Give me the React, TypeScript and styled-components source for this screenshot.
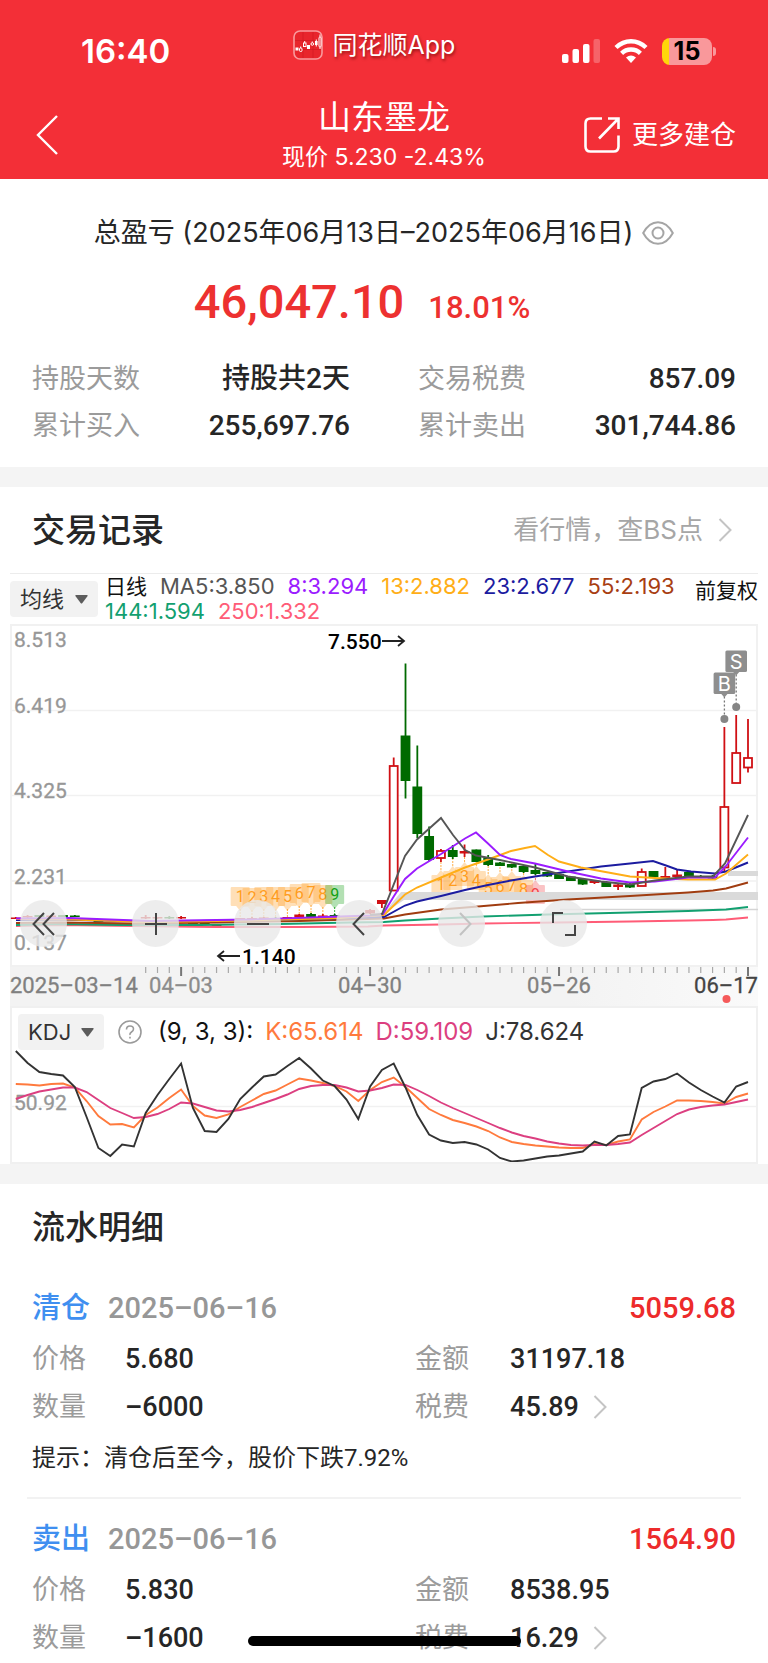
import React from "react";
import styled, { createGlobalStyle } from "styled-components";

const SANS = `Inter, "Noto Sans CJK SC", sans-serif`;
const DIGITS = `Roboto, "Noto Sans CJK SC", sans-serif`;

const GlobalStyle = createGlobalStyle`
  * { box-sizing: border-box; }
  body { margin: 0; background: #fff; color: #262626; font-family: ${SANS}; }
  button, select { font: inherit; color: inherit; border: 0; background: none; padding: 0; margin: 0; cursor: pointer; }
  a { color: inherit; text-decoration: none; }
  h1, h2, p, dl, dd { margin: 0; font-weight: 400; }
  svg { display: block; flex: none; }
`;

/* ---------- header ---------- */

const Page = styled.main`
  width: 100%;
  overflow-x: hidden;
`;

const Header = styled.header`
  background: #f32f37;
  color: #fff;
  padding: 12px 32px 0;
`;

const StatusBar = styled.div`
  display: grid;
  grid-template-columns: 1fr auto 1fr;
  align-items: center;
  height: 78px;
`;

const Clock = styled.time`
  padding-left: 49px;
  font-size: 33px;
  line-height: 40px;
  font-weight: 600;
`;

const AppBadge = styled.div`
  display: flex;
  align-items: center;
  gap: 10px;
  padding: 0 20px 12px 0;
  font-size: 25px;
  line-height: 32px;
  text-shadow: 1px 2px 3px rgba(90, 0, 0, 0.6);
`;

const StatusIcons = styled.div`
  display: flex;
  justify-content: flex-end;
  align-items: center;
  gap: 14px;
  padding-right: 20px;
`;

const Nav = styled.nav`
  display: grid;
  grid-template-columns: 1fr auto 1fr;
  align-items: center;
  height: 89px;
`;

const BackButton = styled.button`
  justify-self: start;
  padding: 0 4px;
`;

const Title = styled.h1`
  font-size: 33px;
  line-height: 44px;
  text-align: center;
`;

const Quote = styled.p`
  font-size: 23px;
  line-height: 36px;
  text-align: center;
`;

const MoreButton = styled.button`
  display: flex;
  align-items: center;
  justify-self: end;
  gap: 12px;
  font-size: 26px;
  line-height: 34px;
`;

/* ---------- summary ---------- */

const Summary = styled.section`
  padding: 34px 32px 18px;
`;

const Period = styled.div`
  display: flex;
  justify-content: center;
  align-items: center;
  gap: 9px;
  font-size: 27px;
  line-height: 40px;
`;

const Total = styled.div`
  display: flex;
  justify-content: center;
  align-items: baseline;
  gap: 24px;
  padding-right: 44px;
  margin: 21px 0 25px;
  color: #ed3130;
  font-family: ${DIGITS};
  font-weight: 500;
`;

const TotalAmount = styled.strong`
  font-size: 47px;
  line-height: 56px;
  font-weight: 500;
`;

const TotalRate = styled.span`
  font-size: 31px;
  line-height: 36px;
`;

const Stats = styled.dl`
  display: grid;
  grid-template-columns: 1fr 1fr;
  column-gap: 68px;
`;

const Stat = styled.div`
  display: flex;
  justify-content: space-between;
  align-items: center;
  height: 47px;
`;

const Label = styled.dt<{ $width?: number }>`
  width: ${(p) => (p.$width ? `${p.$width}px` : "auto")};
  color: #9b9b9b;
  font-size: 27px;
  line-height: 40px;
`;

const Value = styled.dd<{ $large?: boolean }>`
  font-family: ${DIGITS};
  font-size: ${(p) => (p.$large ? 28 : 27)}px;
  font-weight: 500;
  line-height: 40px;
`;

const Divider = styled.div`
  height: 20px;
  background: #f4f4f4;
`;

/* ---------- records and charts ---------- */

const SectionHead = styled.div`
  display: flex;
  justify-content: space-between;
  align-items: center;
  height: 86px;
  padding: 0 36px 0 32px;
`;

const SectionTitle = styled.h2`
  font-size: 33px;
  line-height: 48px;
  font-weight: 500;
`;

const MarketLink = styled.a`
  display: flex;
  align-items: center;
  gap: 15px;
  color: #a6a6a6;
  font-size: 26px;
  line-height: 36px;
`;

const ChartArea = styled.div`
  margin: 0 10px;
`;

const Legend = styled.div`
  display: flex;
  align-items: flex-start;
  border-top: 1px solid #ececec;
  height: 51px;
`;

const SelectWrap = styled.div<{ $width: number }>`
  position: relative;
  flex: none;
  width: ${(p) => p.$width}px;
  height: 36px;
  background: #f2f2f2;
  border-radius: 4px;
  font-size: 22px;
  line-height: 36px;

  select {
    appearance: none;
    width: 100%;
    height: 36px;
    padding: 0 30px 0 10px;
    color: #333;
  }
  svg {
    position: absolute;
    right: 10px;
    top: 14px;
    pointer-events: none;
  }
`;

const LegendSelect = styled.div`
  padding: 7px 7px 0 0;
`;

const MaValues = styled.div`
  flex: 1;
  display: flex;
  flex-wrap: wrap;
  column-gap: 13px;
  font-size: 22px;
  line-height: 25px;
`;

const MaPeriod = styled.span`
  color: #111;
  font-size: 21px;
`;

const Tone = styled.span<{ $color: string }>`
  color: ${(p) => p.$color};
  white-space: nowrap;
`;

const AdjustButton = styled.button`
  margin-top: 3px;
  font-size: 21px;
  line-height: 28px;
  color: #111;
`;

const PriceChart = styled.div`
  position: relative;
`;

const ChartSvg = styled.svg`
  width: 100%;
  height: auto;
`;

const ChartTools = styled.div`
  position: absolute;
  left: 10px;
  bottom: 59px;
  display: flex;
  gap: 55px;
`;

const ToolButton = styled.button<{ $wide?: boolean }>`
  display: grid;
  place-items: center;
  width: 47px;
  height: 47px;
  margin-right: ${(p) => (p.$wide ? "10px" : "0")};
  border-radius: 50%;
  background: rgba(232, 232, 232, 0.8);
`;

const KdjPane = styled.div`
  border: 2px solid #f0f0f0;
`;

const KdjHead = styled.div`
  display: flex;
  align-items: center;
  height: 42px;
  padding: 6px 0 0 6px;
  font-size: 24px;
  line-height: 36px;
`;

const HelpButton = styled.button`
  margin: 0 16px 0 14px;
`;

const KdjValues = styled.div`
  display: flex;
  gap: 12px;
`;

/* ---------- trade flow ---------- */

const Flow = styled.section`
  padding-bottom: 3px;
`;

const FlowTitle = styled(SectionTitle)`
  padding: 19px 32px 21px;
`;

const Trade = styled.article`
  margin: 0 27px;
  padding: 0 5px;

  & + & {
    border-top: 2px solid #f2f2f2;
    padding-top: 4px;
  }
`;

const TradeHead = styled.div`
  display: flex;
  align-items: center;
  padding: 16px 0 7px;
  font-family: ${DIGITS};
  font-size: 29px;
  line-height: 40px;
`;

const Side = styled.span`
  color: #3f8ff0;
  font-weight: 500;
  width: 76px;
`;

const TradeDate = styled.time`
  flex: 1;
  color: #979797;
  font-weight: 500;
`;

const Profit = styled.span`
  color: #ed2b2b;
  font-weight: 500;
`;

const Facts = styled.dl`
  display: grid;
  grid-template-columns: 382fr 320fr;
`;

const Fact = styled.div`
  display: flex;
  align-items: center;
  height: 48px;
`;

const FeeLink = styled.a`
  display: flex;
  align-items: center;
  gap: 14px;
`;

const Tip = styled.p`
  margin: 9px 0 21px;
  font-family: ${DIGITS};
  font-size: 24px;
  line-height: 36px;
`;

const HomeIndicator = styled.div`
  position: fixed;
  bottom: 17px;
  left: 50%;
  width: 273px;
  height: 10px;
  margin-left: -136px;
  border-radius: 5px;
  background: #000;
`;

/* ---------- icons ---------- */

const Chevron = ({ color = "#c4c4c4" }: { color?: string }) => (
  <svg width="14" height="24" viewBox="0 0 14 24" fill="none" stroke={color} strokeWidth="2" aria-hidden="true">
    <path d="M1.5 1 12.5 12 1.5 23" />
  </svg>
);

const Arrow = () => (
  <svg width="13" height="9" viewBox="0 0 13 9" fill="#5c5c5c" aria-hidden="true">
    <path d="M1 0h11q1 0 .6 1L7.4 8q-.9 1-1.8 0L.4 1Q0 0 1 0z" />
  </svg>
);

const AppIcon = () => (
  <svg width="30" height="30" viewBox="0 0 30 30" aria-hidden="true">
    <rect x="1" y="1" width="28" height="28" rx="6" fill="#e8252c" stroke="#f99a9d" strokeWidth="1.6" />
    <path d="M2 10.500h26M2 19.500h26M10 2v26M20 2v26" stroke="#c9161e" strokeWidth=".5" />
    <g fill="#fff">
      <rect x="2.500" y="17.500" width="3" height="3" />
      <rect x="14" y="15" width="3" height="4" />
      <rect x="22" y="11" width="2.600" height="4" />
    </g>
    <g fill="none" stroke="#fff" strokeWidth="1">
      <rect x="6.500" y="18" width="2.500" height="3.500" rx="1" />
      <rect x="10.500" y="13" width="2.500" height="3.500" />
      <circle cx="19.300" cy="14" r="1.300" />
      <rect x="26" y="7" width="2" height="10" rx="1" />
      <path d="M11.700 11v2M19.300 11.500v1.200M23.300 9.500v7M27 4.500v2.500M27 17v2M7.700 16.500v1.500" />
    </g>
  </svg>
);

const Signal = () => (
  <svg width="38" height="26" viewBox="0 0 38 26" fill="#fff" aria-hidden="true">
    <rect x="0" y="16" width="6.500" height="9" rx="2" />
    <rect x="10.500" y="11" width="6.500" height="14" rx="2" />
    <rect x="21" y="6" width="6.500" height="19" rx="2" />
    <rect x="31.500" y="1" width="6.500" height="24" rx="2" opacity=".25" />
  </svg>
);

const Wifi = () => (
  <svg width="34" height="26" viewBox="0 0 34 26" aria-hidden="true">
    <g fill="none" stroke="#fff" strokeWidth="4.400">
      <path d="M2 9.500Q8.500 3.200 17 3.200T32 9.500" />
      <path d="M7.600 15.300Q11.500 11.500 17 11.500T26.400 15.300" />
    </g>
    <path d="M12 19.500Q17 15.500 22 19.500L17 25z" fill="#fff" />
  </svg>
);

const BatteryBox = styled.div`
  display: flex;
  align-items: center;
  gap: 1px;
`;

const BatteryBody = styled.div`
  width: 50px;
  height: 27px;
  border-radius: 8px;
  background: linear-gradient(90deg, #ffd60a 15%, #f9989b 15%);
  color: #000;
  font-size: 25px;
  line-height: 27px;
  font-weight: 700;
  text-align: center;
`;

const BatteryNub = styled.div`
  width: 3px;
  height: 9px;
  border-radius: 0 4px 4px 0;
  background: #f9989b;
`;

const ShareIcon = () => (
  <svg width="36" height="36" viewBox="0 0 36 36" fill="none" stroke="#fff" strokeWidth="2.600" aria-hidden="true">
    <path d="M18 1.500H6.500q-5 0-5 5v23q0 5 5 5h23q5 0 5-5V18.500" />
    <path d="M24 1.500h10.500V12M34 2 15 21.500" />
  </svg>
);

const Eye = () => (
  <svg width="32" height="24" viewBox="0 0 32 24" fill="none" stroke="#a5a5a5" strokeWidth="2" aria-hidden="true">
    <path d="M1.200 12Q7 1.200 16 1.200T30.800 12Q25 22.800 16 22.800T1.200 12z" />
    <circle cx="16" cy="12" r="5.500" />
  </svg>
);

const Tool = ({ d, faded }: { d: string; faded?: boolean }) => (
  <svg width="26" height="26" viewBox="0 0 26 26" fill="none" stroke={faded ? "#c2c2c2" : "#444"} strokeWidth="2" aria-hidden="true">
    <path d={d} />
  </svg>
);

/* ---------- chart data ---------- */

const STEP = 11.81;
const xAt = (i: number) => 748 - STEP * (62 - i);

// [day, body top, body bottom, wick top, wick bottom, kind]
type Candle = [number, number, number, number, number, "up" | "down" | "flat"];

const CANDLES: Candle[] = [
  [0, 917.5, 919, 917, 919, "flat"],
  [1, 916, 917.5, 915, 918, "flat"],
  [2, 915, 917, 915, 917, "down"],
  [3, 915.5, 917, 915, 917, "flat"],
  [4, 915, 917, 915, 917, "down"],
  [5, 915.5, 917, 915, 917, "down"],
  [6, 919, 921, 919, 921, "down"],
  [7, 920.5, 922, 920, 922, "down"],
  [8, 923, 925, 923, 925, "down"],
  [9, 923, 925, 923, 925, "down"],
  [11, 917, 918.5, 915, 919, "flat"],
  [12, 917, 918.5, 917, 919, "flat"],
  [13, 917, 918.5, 916, 919, "down"],
  [14, 917, 918.5, 916, 919, "flat"],
  [15, 922, 924, 922, 924, "down"],
  [16, 922, 924, 922, 924, "down"],
  [17, 925, 926.5, 925, 927, "flat"],
  [19, 918, 919.5, 918, 920, "flat"],
  [20, 918, 919.5, 917, 920, "flat"],
  [21, 917.5, 919, 917, 920, "flat"],
  [22, 918, 919.5, 917, 920, "down"],
  [23, 917, 919, 917, 919, "flat"],
  [24, 914.5, 917.5, 914, 918, "flat"],
  [25, 914, 917, 913, 917, "down"],
  [26, 915.5, 917, 914, 917, "flat"],
  [27, 915, 916.5, 914, 917, "down"],
  [30, 910, 913.5, 909, 914, "flat"],
  [31, 900, 904, 900, 908, "flat"],
  [32, 766, 890.5, 757.5, 890.5, "up"],
  [33, 735.5, 781, 663.5, 798.5, "down"],
  [34, 786.5, 834, 745.5, 838, "down"],
  [35, 836, 860, 826.5, 861, "down"],
  [36, 851, 858, 849, 862, "up"],
  [37, 850, 857, 845, 859, "down"],
  [38, 851, 853.5, 844.5, 857, "flat"],
  [39, 849.5, 862, 849.5, 862, "down"],
  [40, 858, 865, 855, 866, "down"],
  [41, 862.5, 866, 862, 866, "down"],
  [42, 864, 867.5, 864, 868, "down"],
  [43, 866, 872, 866, 873, "down"],
  [44, 870, 874, 863, 875, "down"],
  [45, 872, 876.5, 872, 877, "down"],
  [46, 874, 879, 873, 879, "down"],
  [47, 876.5, 881, 876, 881, "down"],
  [48, 879, 884.5, 878, 885, "down"],
  [49, 880.5, 883, 880, 884, "flat"],
  [50, 882, 887, 881, 887, "down"],
  [51, 884.5, 887, 883, 890, "flat"],
  [52, 884, 887.5, 883, 888, "down"],
  [53, 872, 886, 868.5, 886, "up"],
  [54, 871, 877, 871, 877, "down"],
  [55, 876, 878, 867, 878, "flat"],
  [56, 874.5, 877, 870, 878, "flat"],
  [57, 872, 878, 871, 878, "down"],
  [58, 876, 878, 875, 878, "down"],
  [59, 876, 878.5, 875, 879, "down"],
  [60, 807, 867.5, 727, 871, "up"],
  [61, 753, 783, 715, 783, "up"],
  [62, 758, 767.5, 719, 772.5, "up"],
];

const MA_LINES: { color: string; points: string }[] = [
  { color: "#ff5c77", points: "16,926 60,925 135,926 215,927 300,927 368,926.500 384,925.500 441,924.500 483,923.500 558,922.500 630,921.500 688,920.500 713,920 726,919.500 748,917.500" },
  { color: "#12a070", points: "16,925 60,924 120,925 200,925 280,924 350,922.500 384,922 405,920.500 441,918.500 483,916.500 548,914.500 630,912.500 688,911 713,910 726,909.500 748,907" },
  { color: "#a03c10", points: "16,923 60,922.500 135,923.500 215,922.500 300,921 350,919.500 384,918.500 405,914.500 441,909.500 478,906.500 518,903 568,899.500 630,896 688,892.500 713,890.500 726,888.500 748,882.500" },
  { color: "#1c1ca0", points: "16,920 60,919.500 120,921 200,921 280,919.500 350,918 384,917 405,905.500 417,901.500 441,896 465,890 488,885 511,880.500 535,876.500 568,871.500 601,866.500 630,863.500 653,861 666,865.500 677,869.500 691,871.500 715,873.500 726,871.500 748,862.500" },
  { color: "#ffae17", points: "16,919 70,919.500 150,922 250,920.500 340,918 384,915 405,894.500 417,887.500 441,877.500 465,867.500 488,859.500 511,851 525,848 535,846 548,855 559,861.500 581,867.500 630,876.500 655,878 688,879.500 715,879.500 726,873.500 748,854.500" },
  { color: "#9b1cff", points: "16,918.500 70,918 150,921 250,919.500 340,916.500 370,915.500 383,914 394,896 405,879 417,868.500 441,854 465,838.500 476,832.500 488,843.500 500,855 511,859 535,863.500 568,871.500 601,878.500 630,882.500 655,881.500 688,877.500 715,877.500 726,866 748,837.500" },
  { color: "#555", points: "370,915 382,914 405,856 417,839.500 441,818 453,835 465,850 476,855.500 500,860 535,867.500 568,876.500 601,881.500 630,884.500 655,880.500 688,876.500 713,876.500 725,863.500 748,815" },
];

const KDJ_J = [1051, 1063, 1072, 1074, 1075.5, 1087, 1117, 1148, 1156, 1144.5, 1146.5, 1113, 1095, 1079, 1063.5, 1108, 1131, 1132, 1119, 1099, 1087.5, 1076.5, 1074.5, 1066, 1058, 1068.5, 1080.5, 1086, 1099.5, 1119, 1086.5, 1070, 1063.5, 1087.5, 1115, 1134.5, 1140.5, 1143, 1142, 1144.5, 1149.5, 1158, 1161.5, 1160.5, 1158.5, 1156.5, 1155.5, 1153.5, 1151.5, 1141.5, 1145.5, 1136, 1134.5, 1088, 1081.5, 1079, 1073.5, 1082.5, 1090, 1096.5, 1102.5, 1086.5, 1082];
const KDJ_K = [1084, 1084.5, 1085.5, 1084, 1083.5, 1087.5, 1101, 1116, 1124.5, 1124, 1127.5, 1115, 1107.5, 1098, 1089.5, 1106, 1115.5, 1118, 1114.5, 1107, 1100.5, 1094, 1090.5, 1084.5, 1078.5, 1080.5, 1083, 1086, 1091.5, 1101, 1090, 1082, 1077.5, 1087, 1098, 1109, 1115, 1120, 1123, 1126.5, 1131, 1137.5, 1142, 1144, 1145.5, 1146.5, 1147.5, 1148, 1148, 1144, 1145, 1141.5, 1139.5, 1119.5, 1112, 1106.5, 1100.5, 1100.5, 1101, 1102, 1103.5, 1097, 1093.5];
const KDJ_D = [1099, 1095, 1091.5, 1089.5, 1087.5, 1087.5, 1092, 1100, 1108, 1113, 1118, 1117, 1114, 1109, 1102.5, 1103.5, 1107, 1110.5, 1111.5, 1110, 1107, 1103, 1099, 1094.5, 1089, 1086, 1085, 1085, 1087.5, 1091.5, 1090.5, 1088, 1084.5, 1085, 1090, 1096, 1102.5, 1108, 1113, 1118, 1123, 1128, 1132.5, 1136, 1138.5, 1141.5, 1143.5, 1145, 1145.5, 1145, 1145, 1144, 1142.5, 1135, 1128, 1121, 1114, 1109.5, 1107, 1105.5, 1104.5, 1102, 1099.5];

const toPoints = (ys: number[]) => ys.map((y, i) => `${xAt(i).toFixed(1)},${y}`).join(" ");

// [day, box top, digit, colour]
const COUNTS: [number, number, string, string][] = [
  [19, 887, "1", "#ff9d1e"],
  [20, 888, "2", "#ff9d1e"],
  [21, 887, "3", "#ff9d1e"],
  [22, 887, "4", "#ff9d1e"],
  [23, 887, "5", "#ff9d1e"],
  [24, 884, "6", "#ff9d1e"],
  [25, 883, "7", "#ff9d1e"],
  [26, 885, "8", "#ff9d1e"],
  [27, 885, "9", "#13a013"],
];
const COUNTS_AFTER: [number, number, string, string][] = [
  [36, 875, "1", "#ff9d1e"],
  [37, 871, "2", "#ff9d1e"],
  [38, 867, "3", "#ff9d1e"],
  [39, 871, "4", "#ff9d1e"],
  [40, 879, "5", "#ff9d1e"],
  [41, 877, "6", "#ff9d1e"],
  [42, 876, "7", "#ff9d1e"],
  [43, 880, "8", "#ff9d1e"],
  [44, 885, "9", "#f0434a"],
];

const CountFlag = ({ x, y, n, color, up }: { x: number; y: number; n: string; color: string; up?: boolean }) => (
  <g>
    <rect x={x - 9.5} y={y} width="19" height="19" rx="1" fill={color} opacity=".32" />
    <path
      d={up ? `M${x - 4} ${y}l4-5 4 5z` : `M${x - 4} ${y + 19}l4 5 4-5z`}
      fill={color}
      opacity=".32"
    />
    <path
      d={up ? `M${x} ${y - 5}v-9` : `M${x} ${y + 22}v8`}
      stroke={color}
      strokeDasharray="2 1"
      opacity=".8"
    />
    <text x={x} y={y + 15} fill={color} fontSize="16" fontWeight="400" textAnchor="middle">
      {n}
    </text>
  </g>
);

const CandleMark = ({ c }: { c: Candle }) => {
  const [i, top, bottom, high, low, kind] = c;
  const x = xAt(i);
  const color = kind === "down" ? "#006a00" : "#d01014";
  if (kind === "up") {
    return (
      <g fill="#fff" stroke={color} strokeWidth="1.800">
        <path d={`M${x} ${high}V${top}M${x} ${bottom}V${low}`} />
        <rect x={x - 4} y={top} width="8" height={bottom - top} />
      </g>
    );
  }
  return (
    <g fill={color}>
      <rect x={x - 0.9} y={high} width="1.800" height={low - high} />
      <rect x={x - 4.9} y={top} width="9.800" height={bottom - top} />
    </g>
  );
};

const Marker = ({ x, y, dotY, letter }: { x: number; y: number; dotY: number; letter: string }) => (
  <g>
    <path d={`M${x} ${y + 24}V${dotY}`} stroke="#777" strokeWidth="1.300" strokeDasharray="2 2" />
    <circle cx={x} cy={dotY} r="4" fill="#858585" />
    <rect x={x - 10.8} y={y} width="21.600" height="21.500" rx="1.500" fill="#8e8e8e" />
    <path d={`M${x - 3.5} ${y + 21}l3.500 4 3.500-4z`} fill="#8e8e8e" />
    <text x={x} y={y + 18} fill="#fff" fontFamily={SANS} fontSize="20" textAnchor="middle">
      {letter}
    </text>
  </g>
);

const PRICE_LABELS: [string, number][] = [
  ["8.513", 647],
  ["6.419", 713],
  ["4.325", 798],
  ["2.231", 884],
  ["0.137", 950],
];

const DATE_LABELS: [string, number, string][] = [
  ["04–03", 181, "#8c8c8c"],
  ["04–30", 370, "#808080"],
  ["05–26", 559, "#808080"],
  ["06–17", 726, "#444"],
];

const PriceSvg = () => (
  <ChartSvg viewBox="10 624 748 382" role="img" aria-label="日线">
    <defs>
      <linearGradient id="axis" x1="0" x2="1">
        <stop offset="0" stopColor="#f3f3f3" />
        <stop offset=".75" stopColor="#f3f3f3" />
        <stop offset="1" stopColor="#fafafa" />
      </linearGradient>
    </defs>
    <rect x="10" y="966" width="748" height="40" fill="url(#axis)" />
    <g stroke="#f1f1f1" strokeWidth="1.500">
      <path d="M10 710.500H758M10 795.500H758M10 881H758" />
      <rect x="11" y="625" width="746" height="341" fill="none" strokeWidth="2" />
    </g>
    <g fontFamily={DIGITS} fontSize="21" fill="#979797" stroke="#979797" strokeWidth=".3">
      {PRICE_LABELS.map(([t, y]) => (
        <text key={t} x="14" y={y}>
          {t}
        </text>
      ))}
    </g>
    <g fontFamily={DIGITS}>
      {COUNTS.map(([i, y, n, color]) => (
        <CountFlag key={i} x={xAt(i)} y={y} n={n} color={color} />
      ))}
      {COUNTS_AFTER.map(([i, y, n, color]) => (
        <CountFlag key={i} x={xAt(i)} y={y} n={n} color={color} up />
      ))}
    </g>
    <path d="M383 914 401 892H758V900H404z" fill="#dadada" />
    <rect x="728" y="871" width="30" height="5" fill="#dadada" />
    <path d="M560 909.500H758" stroke="#d5d5d5" strokeWidth="1.500" />
    {CANDLES.map((c) => (
      <CandleMark key={c[0]} c={c} />
    ))}
    {MA_LINES.map((l) => (
      <polyline key={l.color} points={l.points} fill="none" stroke={l.color} strokeWidth="1.900" />
    ))}
    <Marker x={736.2} y={650.5} dotY={707} letter="S" />
    <Marker x={724.4} y={672.5} dotY={719} letter="B" />
    <g fontFamily={DIGITS} fontSize="21" fontWeight="500" fill="#000">
      <text x="328" y="649">7.550</text>
      <text x="242" y="964">1.140</text>
    </g>
    <g fill="none" stroke="#222" strokeWidth="1.800">
      <path d="M382 641h22M398 636l6 5-6 5" />
      <path d="M240 956h-22M224 951l-6 5 6 5" />
    </g>
    <g stroke="#a8a8a8" strokeWidth="1.200">
      {Array.from({ length: 52 }, (_, k) => k + 11).map((i) => (
        <path
          key={i}
          d={`M${xAt(i)} 967v${(i - 14) % 16 === 0 ? 9 : 6}`}
          stroke={(i - 14) % 16 === 0 ? "#777" : undefined}
          strokeWidth={(i - 14) % 16 === 0 ? 2 : undefined}
        />
      ))}
    </g>
    <g fontFamily={DIGITS} fontSize="22" strokeWidth=".3">
      <text x="10" y="993" fill="#808080" stroke="#808080">
        2025–03–14
      </text>
      {DATE_LABELS.map(([t, x, color]) => (
        <text key={t} x={x} y="993" fill={color} stroke={color} textAnchor="middle">
          {t}
        </text>
      ))}
    </g>
    <circle cx="726.500" cy="999" r="4" fill="#f55a5a" />
  </ChartSvg>
);

const KdjSvg = () => (
  <ChartSvg viewBox="12 1050 744 112" role="img" aria-label="KDJ">
    <path d="M12 1106.500H756" stroke="#f1f1f1" strokeWidth="1.500" />
    <text x="14" y="1110" fontFamily={DIGITS} fontSize="21" fill="#979797" stroke="#979797" strokeWidth=".3">
      50.92
    </text>
    <g fill="none" strokeWidth="1.900">
      <polyline points={toPoints(KDJ_K)} stroke="#ff7a3d" />
      <polyline points={toPoints(KDJ_D)} stroke="#dc3f80" />
      <polyline points={toPoints(KDJ_J)} stroke="#333" />
    </g>
  </ChartSvg>
);

/* ---------- page data ---------- */

const STATS = [
  ["持股天数", "持股共2天"],
  ["交易税费", "857.09"],
  ["累计买入", "255,697.76"],
  ["累计卖出", "301,744.86"],
];

const MA_VALUES = [
  ["MA5:3.850", "#555"],
  ["8:3.294", "#9b1cff"],
  ["13:2.882", "#ffae17"],
  ["23:2.677", "#1c1ca0"],
  ["55:2.193", "#a83e12"],
  ["144:1.594", "#12a070"],
  ["250:1.332", "#ff5c77"],
];

const TRADES = [
  { side: "清仓", date: "2025–06–16", profit: "5059.68", price: "5.680", amount: "31197.18", qty: "–6000", fee: "45.89", tip: "提示：清仓后至今，股价下跌7.92%" },
  { side: "卖出", date: "2025–06–16", profit: "1564.90", price: "5.830", amount: "8538.95", qty: "–1600", fee: "16.29" },
];

export default function App() {
  return (
    <Page>
      <GlobalStyle />
      <Header>
        <StatusBar>
          <Clock>16:40</Clock>
          <AppBadge>
            <AppIcon />
            同花顺App
          </AppBadge>
          <StatusIcons>
            <Signal />
            <Wifi />
            <BatteryBox>
              <BatteryBody>15</BatteryBody>
              <BatteryNub />
            </BatteryBox>
          </StatusIcons>
        </StatusBar>
        <Nav>
          <BackButton aria-label="返回">
            <svg width="22" height="40" viewBox="0 0 22 40" fill="none" stroke="#fff" strokeWidth="2.400">
              <path d="M21 1 2 20 21 39" />
            </svg>
          </BackButton>
          <div>
            <Title>山东墨龙</Title>
            <Quote>现价 5.230 -2.43%</Quote>
          </div>
          <MoreButton>
            <ShareIcon />
            更多建仓
          </MoreButton>
        </Nav>
      </Header>

      <Summary>
        <Period>
          <span>总盈亏 (2025年06月13日–2025年06月16日)</span>
          <button aria-label="隐藏金额">
            <Eye />
          </button>
        </Period>
        <Total>
          <TotalAmount>46,047.10</TotalAmount>
          <TotalRate>18.01%</TotalRate>
        </Total>
        <Stats>
          {STATS.map(([k, v]) => (
            <Stat key={k}>
              <Label>{k}</Label>
              <Value $large>{v}</Value>
            </Stat>
          ))}
        </Stats>
      </Summary>

      <Divider />

      <section>
        <SectionHead>
          <SectionTitle>交易记录</SectionTitle>
          <MarketLink href="#market">
            看行情，查BS点
            <Chevron />
          </MarketLink>
        </SectionHead>
        <ChartArea>
          <Legend>
            <LegendSelect>
              <SelectWrap $width={88}>
                <select aria-label="主图指标" defaultValue="均线">
                  <option>均线</option>
                </select>
                <Arrow />
              </SelectWrap>
            </LegendSelect>
            <MaValues>
              <MaPeriod>日线</MaPeriod>
              {MA_VALUES.map(([t, c]) => (
                <Tone key={t} $color={c}>
                  {t}
                </Tone>
              ))}
            </MaValues>
            <AdjustButton>前复权</AdjustButton>
          </Legend>
          <PriceChart>
            <PriceSvg />
            <ChartTools>
              <ToolButton $wide aria-label="最早">
                <Tool d="M13 2 2.500 13 13 24M23 2 12.500 13 23 24" />
              </ToolButton>
              <ToolButton aria-label="放大">
                <Tool d="M13 2v22M2 13h22" />
              </ToolButton>
              <ToolButton aria-label="缩小">
                <Tool d="M2 13h22" />
              </ToolButton>
              <ToolButton aria-label="向左">
                <Tool d="M17 2 6.500 13 17 24" />
              </ToolButton>
              <ToolButton aria-label="向右" disabled>
                <Tool faded d="M11 2 21.500 13 11 24" />
              </ToolButton>
              <ToolButton aria-label="全屏">
                <Tool d="M2 12V2h10M14 24h10V14" />
              </ToolButton>
            </ChartTools>
          </PriceChart>
          <KdjPane>
            <KdjHead>
              <SelectWrap $width={86}>
                <select aria-label="副图指标" defaultValue="KDJ">
                  <option>KDJ</option>
                </select>
                <Arrow />
              </SelectWrap>
              <HelpButton aria-label="指标说明">
                <svg width="24" height="24" viewBox="0 0 24 24" fill="none" stroke="#9a9a9a" strokeWidth="1.600">
                  <circle cx="12" cy="12" r="11" />
                  <path d="M8.500 9.500q0-3.500 3.500-3.500t3.500 3q0 1.800-2 3t-1.500 3M12 16.700v1.800" />
                </svg>
              </HelpButton>
              <KdjValues>
                <Tone $color="#111">(9, 3, 3):</Tone>
                <Tone $color="#ff7a3d">K:65.614</Tone>
                <Tone $color="#dc3f80">D:59.109</Tone>
                <Tone $color="#333">J:78.624</Tone>
              </KdjValues>
            </KdjHead>
            <KdjSvg />
          </KdjPane>
        </ChartArea>
      </section>

      <Divider />

      <Flow>
        <FlowTitle>流水明细</FlowTitle>
        {TRADES.map((t) => (
          <Trade key={t.profit}>
            <TradeHead>
              <Side>{t.side}</Side>
              <TradeDate>{t.date}</TradeDate>
              <Profit>{t.profit}</Profit>
            </TradeHead>
            <Facts>
              <Fact>
                <Label $width={93}>价格</Label>
                <Value>{t.price}</Value>
              </Fact>
              <Fact>
                <Label $width={95}>金额</Label>
                <Value>{t.amount}</Value>
              </Fact>
              <Fact>
                <Label $width={93}>数量</Label>
                <Value>{t.qty}</Value>
              </Fact>
              <Fact>
                <Label $width={95}>税费</Label>
                <Value>
                  <FeeLink href="#fee">
                    {t.fee}
                    <Chevron />
                  </FeeLink>
                </Value>
              </Fact>
            </Facts>
            {t.tip && <Tip>{t.tip}</Tip>}
          </Trade>
        ))}
      </Flow>
      <HomeIndicator />
    </Page>
  );
}
